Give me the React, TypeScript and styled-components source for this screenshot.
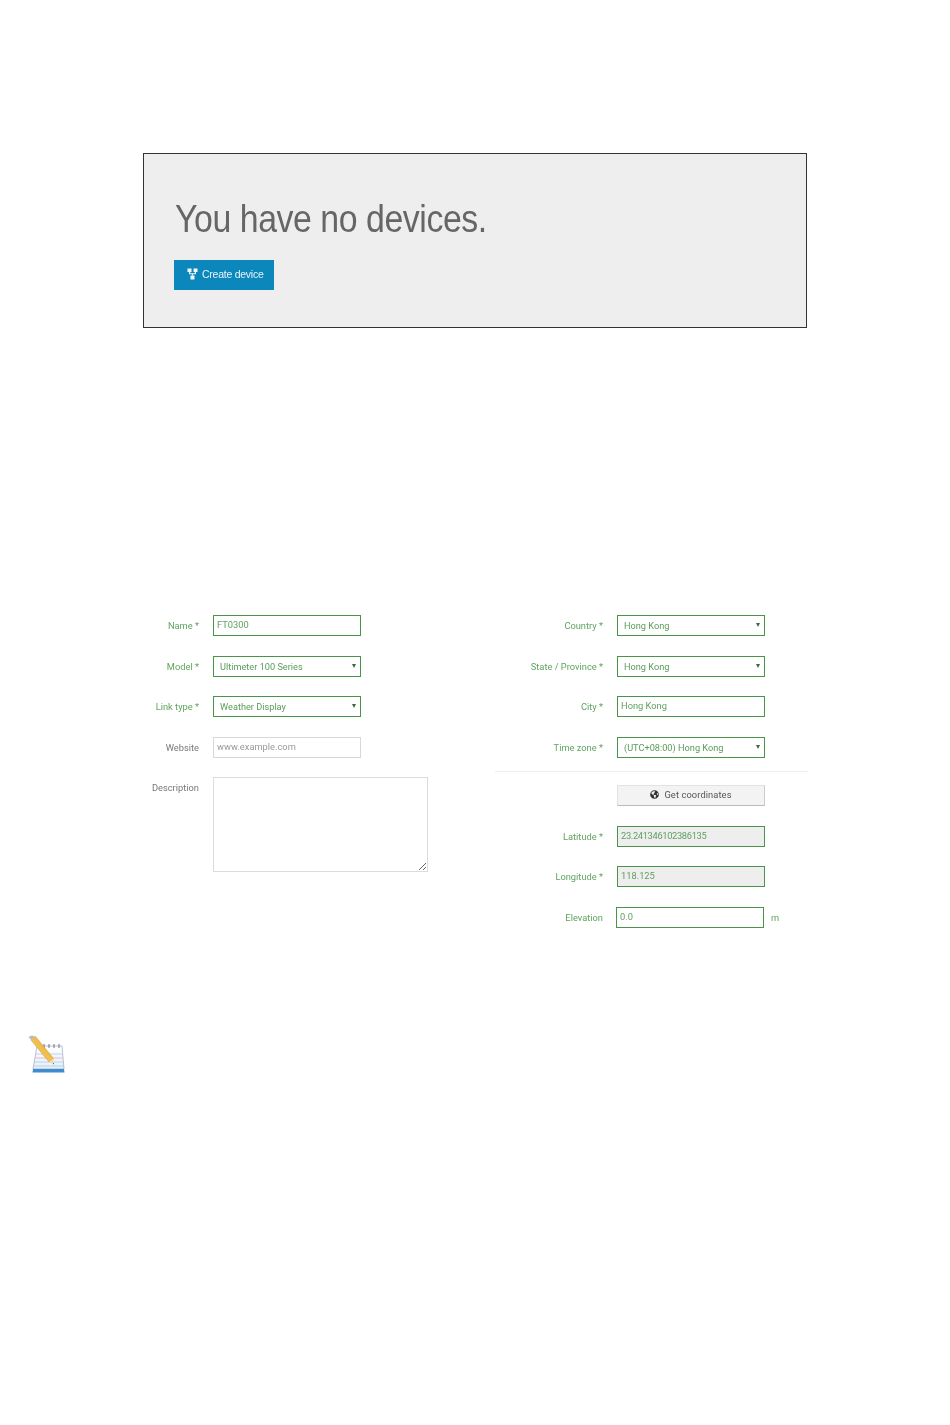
import React from "react";
import styled, { createGlobalStyle } from "styled-components";
import { FaGlobeAmericas } from "react-icons/fa";

const Global = createGlobalStyle`
  html, body { margin: 0; padding: 0; background: #fff; }
  body { font-family: Roboto, "Liberation Sans", sans-serif; }
`;
const Page = styled.div`
  width: 950px;
  min-height: 1425px;
  padding-top: 153px;
  box-sizing: border-box;
  overflow: hidden;
  filter: blur(0.35px);
`;
const Panel = styled.section`
  box-sizing: border-box;
  width: 664px;
  height: 175px;
  margin-left: 143px;
  padding: 43px 30px 0;
  background: #eeeeee;
  border: 1px solid #333;
`;
const Title = styled.h1`
  margin: 0 0 19px;
  font: 400 38px/44px "Liberation Sans", Arial, sans-serif;
  letter-spacing: -0.5px;
  color: #666;
  white-space: nowrap;
  transform: translateX(1px) scaleX(0.891);
  transform-origin: 0 50%;
`;
const CreateButton = styled.button`
  display: flex;
  align-items: center;
  gap: 4px;
  width: 100px;
  height: 30px;
  padding: 0 0 2px 13px;
  border: 0;
  background: #0b87bb;
  color: #e8f4fa;
  font: 400 10.5px "Liberation Sans", Arial, sans-serif;
  letter-spacing: -0.25px;
`;
const Form = styled.form`
  display: flex;
  margin: 287px 0 0 150px;
`;
const Column = styled.div`
  width: ${(p: { $w: number }) => p.$w}px;
`;
const Group = styled.div`
  display: flex;
  flex-direction: column;
  gap: 19.5px;
`;
const Row = styled.div`
  display: flex;
  align-items: flex-start;
  gap: 14px;
`;
const Label = styled.label<{ $w: number; $ok?: boolean }>`
  width: ${(p) => p.$w}px;
  flex: none;
  text-align: right;
  font-size: 9.3px;
  line-height: 21px;
  white-space: nowrap;
  direction: rtl;
  color: ${(p) => (p.$ok ? "#5fa35f" : "#777")};
  & > span { direction: ltr; unicode-bidi: isolate; }
`;
const TextBox = styled.input<{ $ok?: boolean; $grey?: boolean; $shift?: boolean; $tight?: boolean }>`
  box-sizing: border-box;
  width: 148px;
  height: 21px;
  padding: 0 3px 2px;
  margin-left: ${(p) => (p.$shift ? "-1px" : "0")};
  border: 1px solid ${(p) => (p.$ok ? "#4a944a" : "#d8d8d8")};
  border-radius: 0;
  outline: 0;
  background: ${(p) => (p.$grey ? "#eeeeee" : "#fff")};
  color: #5f9f5f;
  font: 400 9.3px Roboto, sans-serif;
  letter-spacing: ${(p) => (p.$tight ? "-0.33px" : "0")};
  &::placeholder { color: #999; opacity: 1; }
`;
const SelectWrap = styled.div`
  position: relative;
  width: 148px;
  height: 21px;
`;
const SelectBox = styled.select`
  display: block;
  box-sizing: border-box;
  width: 100%;
  height: 100%;
  padding: 0 6px;
  border: 1px solid #4a944a;
  border-radius: 0;
  outline: 0;
  appearance: none;
  background: #fff;
  color: #5a9c5a;
  font: 400 9.2px Roboto, sans-serif;
`;
const Caret = styled.span`
  position: absolute;
  right: 5px;
  top: 8px;
  width: 0;
  height: 0;
  border-left: 2px solid transparent;
  border-right: 2px solid transparent;
  border-top: 4px solid #3d6b3d;
`;
const TextArea = styled.textarea`
  box-sizing: border-box;
  width: 215px;
  height: 95px;
  margin: 0;
  border: 1px solid #dcdcdc;
  border-radius: 0;
  outline: 0;
  display: block;
`;
const Divider = styled.hr`
  margin: 13.5px 0 13px;
  border: 0;
  border-top: 1px solid #eeeeee;
`;
const CoordButton = styled.button`
  display: flex;
  align-items: center;
  justify-content: center;
  gap: 5px;
  box-sizing: border-box;
  width: 148px;
  height: 21px;
  padding: 0 0 2px;
  border: 0;
  border-right: 1px solid #ccc;
  border-bottom: 1px solid #bbb;
  border-top: 1px solid #e2e2e2;
  border-left: 1px solid #e2e2e2;
  background: #f3f3f3;
  color: #555;
  font: 400 9.3px Roboto, sans-serif;
  letter-spacing: 0.1px;
`;
const Unit = styled.span`
  margin-left: -7px;
  font-size: 9.3px;
  line-height: 21px;
  color: #5fa35f;
`;
const NoteWrap = styled.div`
  margin: 107px 0 0 28px;
  width: 38px;
  height: 39px;
`;

const Field = ({ w, label, ok, children }: { w: number; label: string; ok?: boolean; children: React.ReactNode }) => (
  <Row>
    <Label $w={w} $ok={ok}><span>{label}</span></Label>
    {children}
  </Row>
);
const Select = ({ value }: { value: string }) => (
  <SelectWrap>
    <SelectBox defaultValue={value}><option>{value}</option></SelectBox>
    <Caret />
  </SelectWrap>
);
const DeviceIcon = () => (
  <svg width="11" height="12" viewBox="0 0 11 12" fill="#f2f8fb">
    <rect x="0.5" y="0.5" width="4" height="3.5" />
    <rect x="6.5" y="0.5" width="4" height="3.5" />
    <rect x="3.5" y="7.5" width="4" height="4" />
    <path d="M2 4h1.2v1.2h4.6V4H9v2.2H6v1.3H5V6.2H2z" />
  </svg>
);
const NoteIcon = () => (
  <svg width="38" height="39" viewBox="0 0 38 39">
    <defs>
      <linearGradient id="pg" x1="0" y1="0" x2="0" y2="1">
        <stop offset="0" stopColor="#ffffff" />
        <stop offset="1" stopColor="#e4eefa" />
      </linearGradient>
      <linearGradient id="pen" x1="0" y1="1" x2="1" y2="0">
        <stop offset="0" stopColor="#f9d968" />
        <stop offset="1" stopColor="#e9a52c" />
      </linearGradient>
    </defs>
    <path d="M9 11 L34 11 L36 34 L5 34 Z" fill="url(#pg)" stroke="#93a9c0" strokeWidth="0.7" />
    <path d="M5 34 L36 34 L36.500 37.500 L4.500 37.500 Z" fill="#3f8ccd" />
    <path d="M8 19H34M7 27H35M6.500 31H35.500" stroke="#a9c3e0" strokeWidth="0.7" />
    <path d="M7.500 23H34.500" stroke="#e8a2ab" strokeWidth="0.7" />
    <path d="M16 9V13M21 9V13M26 9V13M31 9V13" stroke="#6b7280" strokeWidth="1" />
    <path d="M3 5 L7.500 1.500 L25.500 23.500 L21 27 Z" fill="url(#pen)" stroke="#b5812a" strokeWidth="0.4" />
    <path d="M0.500 2 L3.500 0.500 L7.500 1.500 L3 5 Z" fill="#b7bcc4" />
    <path d="M21 27 L25.500 23.500 L26 29.500 Z" fill="#f0dcb4" />
    <path d="M25 28.500 L25.800 27.800 L26 29.500 Z" fill="#333" />
  </svg>
);

export default function App() {
  return (
    <Page>
      <Global />
      <Panel>
        <Title>You have no devices.</Title>
        <CreateButton type="button"><DeviceIcon />Create device</CreateButton>
      </Panel>
      <Form>
        <Column $w={345}>
          <Group>
            <Field w={49} label="Name *" ok><TextBox $ok defaultValue="FT0300" /></Field>
            <Field w={49} label="Model *" ok><Select value="Ultimeter 100 Series" /></Field>
            <Field w={49} label="Link type *" ok><Select value="Weather Display" /></Field>
            <Field w={49} label="Website"><TextBox placeholder="www.example.com" /></Field>
            <Field w={49} label="Description"><TextArea /></Field>
          </Group>
        </Column>
        <Column $w={313}>
          <Group>
            <Field w={108} label="Country *" ok><Select value="Hong Kong" /></Field>
            <Field w={108} label="State / Province *" ok><Select value="Hong Kong" /></Field>
            <Field w={108} label="City *" ok><TextBox $ok defaultValue="Hong Kong" /></Field>
            <Field w={108} label="Time zone *" ok><Select value="(UTC+08:00) Hong Kong" /></Field>
          </Group>
          <Divider />
          <Group>
            <Row>
              <Label $w={108} />
              <CoordButton type="button"><FaGlobeAmericas size={9} color="#333" />Get coordinates</CoordButton>
            </Row>
            <Field w={108} label="Latitude *" ok><TextBox $ok $grey $tight defaultValue="23.241346102386135" /></Field>
            <Field w={108} label="Longitude *" ok><TextBox $ok $grey defaultValue="118.125" /></Field>
            <Field w={108} label="Elevation" ok>
              <TextBox $ok $shift defaultValue="0.0" />
              <Unit>m</Unit>
            </Field>
          </Group>
        </Column>
      </Form>
      <NoteWrap><NoteIcon /></NoteWrap>
    </Page>
  );
}
